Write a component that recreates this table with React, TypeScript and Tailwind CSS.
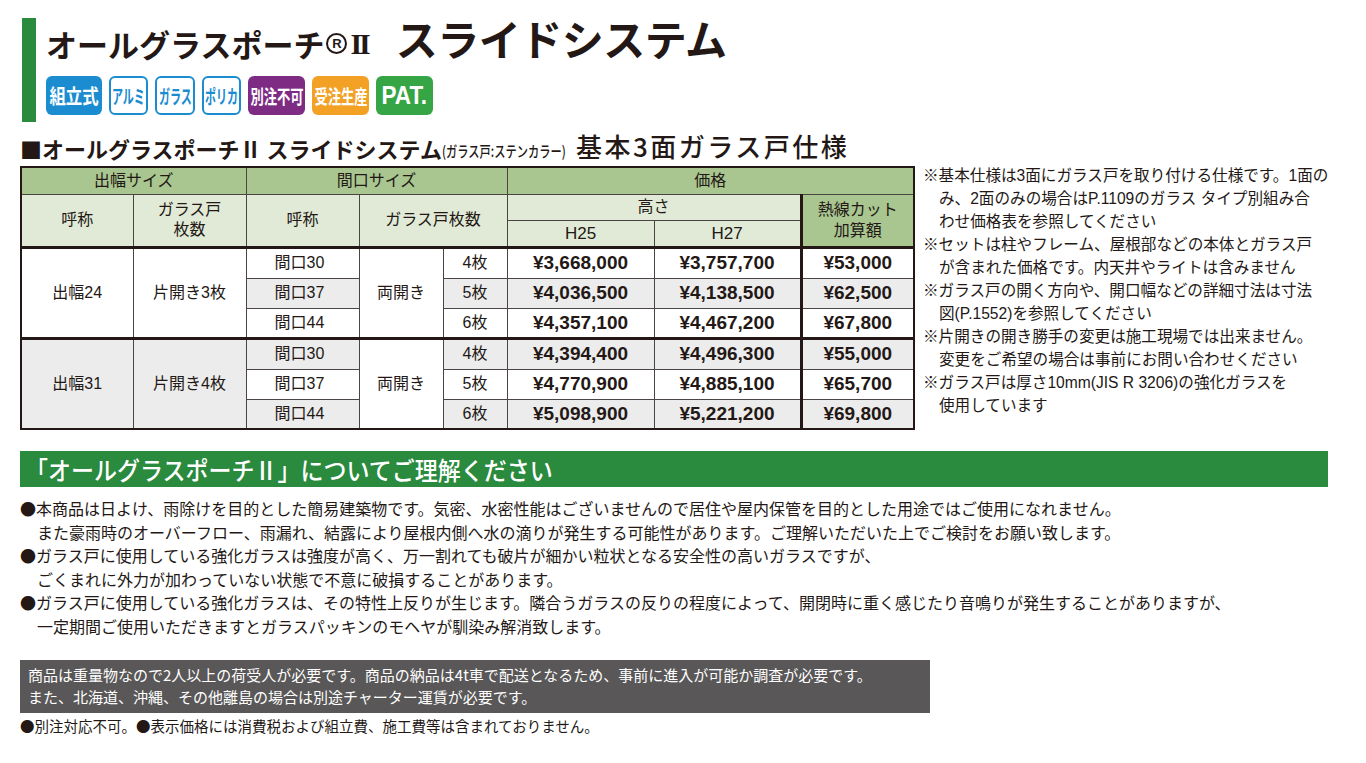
import React from "react";

const JP = "font-['Noto_Sans_CJK_JP',sans-serif]";
const TB = "font-['Liberation_Sans','Noto_Sans_CJK_JP',sans-serif]";

const thin = "border border-[#4a4442]";

function Badge({
  text,
  w,
  cls,
  scale,
  size,
}: {
  text: string;
  w: string;
  cls: string;
  scale: string;
  size: string;
}) {
  return (
    <div className={`flex h-[39px] items-center justify-center overflow-hidden rounded-[6px] ${w} ${cls}`}>
      <span className={`inline-block whitespace-nowrap font-bold leading-none ${size} ${scale}`}>{text}</span>
    </div>
  );
}

type Row = {
  maguchi: string;
  mai: string;
  h25: string;
  h27: string;
  cut: string;
  gray: boolean;
};

const group1: Row[] = [
  { maguchi: "間口30", mai: "4枚", h25: "¥3,668,000", h27: "¥3,757,700", cut: "¥53,000", gray: false },
  { maguchi: "間口37", mai: "5枚", h25: "¥4,036,500", h27: "¥4,138,500", cut: "¥62,500", gray: true },
  { maguchi: "間口44", mai: "6枚", h25: "¥4,357,100", h27: "¥4,467,200", cut: "¥67,800", gray: false },
];
const group2: Row[] = [
  { maguchi: "間口30", mai: "4枚", h25: "¥4,394,400", h27: "¥4,496,300", cut: "¥55,000", gray: true },
  { maguchi: "間口37", mai: "5枚", h25: "¥4,770,900", h27: "¥4,885,100", cut: "¥65,700", gray: false },
  { maguchi: "間口44", mai: "6枚", h25: "¥5,098,900", h27: "¥5,221,200", cut: "¥69,800", gray: true },
];

function Group({ rows, name, door, first }: { rows: Row[]; name: string; door: string; first: boolean }) {
  const topThick = "border-t-[3px] border-t-[#231815]";
  return (
    <>
      {rows.map((r, i) => {
        const bg = r.gray ? "bg-[#ececec]" : "bg-white";
        const t = i === 0 ? topThick : "";
        return (
          <tr key={i} className="h-[30px]">
            {i === 0 && (
              <>
                <td rowSpan={3} className={`${thin} ${topThick} ${first ? "bg-white" : "bg-[#ececec]"} text-center text-[16px]`}>
                  {name}
                </td>
                <td rowSpan={3} className={`${thin} ${topThick} ${first ? "bg-white" : "bg-[#ececec]"} text-center text-[16px]`}>
                  {door}
                </td>
              </>
            )}
            <td className={`${thin} ${t} ${bg} pl-[28px] text-left text-[16px]`}>{r.maguchi}</td>
            {i === 0 && (
              <td rowSpan={3} className={`${thin} ${topThick} bg-white text-center text-[16px]`}>
                両開き
              </td>
            )}
            <td className={`${thin} ${t} ${bg} text-center text-[16px]`}>{r.mai}</td>
            <td className={`${thin} ${t} ${bg} text-center text-[19px] font-bold`}>{r.h25}</td>
            <td className={`${thin} ${t} ${bg} text-center text-[19px] font-bold`}>{r.h27}</td>
            <td className={`${thin} ${t} border-l-[3px] border-l-[#231815] ${bg} text-center text-[19px] font-bold`}>
              {r.cut}
            </td>
          </tr>
        );
      })}
    </>
  );
}

function PriceTable() {
  const h1 = "bg-[#a9c690]";
  const h2 = "bg-[#e1ead6]";
  return (
    <table className={`w-[893px] table-fixed border-collapse border-2 border-[#231815] text-[#231815] ${TB}`}>
      <colgroup>
        <col className="w-[112px]" />
        <col className="w-[113px]" />
        <col className="w-[113px]" />
        <col className="w-[84px]" />
        <col className="w-[64px]" />
        <col className="w-[147px]" />
        <col className="w-[147px]" />
        <col className="w-[113px]" />
      </colgroup>
      <thead>
        <tr className="h-[27px]">
          <th colSpan={2} className={`${thin} ${h1} text-center text-[16px] font-normal`}>出幅サイズ</th>
          <th colSpan={3} className={`${thin} ${h1} text-center text-[16px] font-normal`}>間口サイズ</th>
          <th colSpan={3} className={`${thin} ${h1} text-center text-[16px] font-normal`}>価格</th>
        </tr>
        <tr className="h-[26px]">
          <th rowSpan={2} className={`${thin} ${h2} text-center text-[16px] font-normal`}>呼称</th>
          <th rowSpan={2} className={`${thin} ${h2} text-center text-[16px] font-normal leading-[20px]`}>
            ガラス戸
            <br />
            枚数
          </th>
          <th rowSpan={2} className={`${thin} ${h2} text-center text-[16px] font-normal`}>呼称</th>
          <th rowSpan={2} colSpan={2} className={`${thin} ${h2} text-center text-[16px] font-normal`}>ガラス戸枚数</th>
          <th colSpan={2} className={`${thin} ${h2} text-center text-[16px] font-normal`}>高さ</th>
          <th
            rowSpan={2}
            className={`${thin} border-l-[3px] border-l-[#231815] ${h1} text-center text-[16px] font-normal leading-[21px]`}
          >
            熱線カット
            <br />
            加算額
          </th>
        </tr>
        <tr className="h-[26px]">
          <th className={`${thin} ${h2} text-center text-[17px] font-normal`}>H25</th>
          <th className={`${thin} ${h2} text-center text-[17px] font-normal`}>H27</th>
        </tr>
      </thead>
      <tbody>
        <Group rows={group1} name="出幅24" door="片開き3枚" first={true} />
        <Group rows={group2} name="出幅31" door="片開き4枚" first={false} />
      </tbody>
    </table>
  );
}

const notes: [boolean, string][] = [
  [true, "※基本仕様は3面にガラス戸を取り付ける仕様です。1面の"],
  [false, "み、2面のみの場合はP.1109のガラス タイプ別組み合"],
  [false, "わせ価格表を参照してください"],
  [true, "※セットは柱やフレーム、屋根部などの本体とガラス戸"],
  [false, "が含まれた価格です。内天井やライトは含みません"],
  [true, "※ガラス戸の開く方向や、開口幅などの詳細寸法は寸法"],
  [false, "図(P.1552)を参照してください"],
  [true, "※片開きの開き勝手の変更は施工現場では出来ません。"],
  [false, "変更をご希望の場合は事前にお問い合わせください"],
  [true, "※ガラス戸は厚さ10mm(JIS R 3206)の強化ガラスを"],
  [false, "使用しています"],
];

const bullets: [boolean, string][] = [
  [true, "●本商品は日よけ、雨除けを目的とした簡易建築物です。気密、水密性能はございませんので居住や屋内保管を目的とした用途ではご使用になれません。"],
  [false, "また豪雨時のオーバーフロー、雨漏れ、結露により屋根内側へ水の滴りが発生する可能性があります。ご理解いただいた上でご検討をお願い致します。"],
  [true, "●ガラス戸に使用している強化ガラスは強度が高く、万一割れても破片が細かい粒状となる安全性の高いガラスですが、"],
  [false, "ごくまれに外力が加わっていない状態で不意に破損することがあります。"],
  [true, "●ガラス戸に使用している強化ガラスは、その特性上反りが生じます。隣合うガラスの反りの程度によって、開閉時に重く感じたり音鳴りが発生することがありますが、"],
  [false, "一定期間ご使用いただきますとガラスパッキンのモヘヤが馴染み解消致します。"],
];

export default function App() {
  return (
    <div className={`relative h-[763px] w-[1366px] overflow-hidden bg-white text-[#231815] ${JP}`}>
      {/* Title block */}
      <div className="ml-[22px] flex pt-[18px]">
        <div className="h-[104px] w-[14px] bg-[#2a8a3e]" />
        <div className="ml-[10px] flex flex-col">
          <div className="flex h-[43px] items-end whitespace-nowrap pb-[2px] font-bold leading-none">
            <span className="text-[31px]">オールグラスポーチ</span>
            <span className="mb-[5px] ml-[2px] flex h-[21px] w-[21px] items-center justify-center rounded-full border-2 border-[#231815] font-['Liberation_Sans',sans-serif] text-[13px] font-bold leading-none">
              R
            </span>
            <span className="ml-[3px] font-['Liberation_Serif',serif] text-[30px] font-bold tracking-[-3px]">II</span>
            <span className="ml-[28px] text-[42px] tracking-[-0.5px]">スライドシステム</span>
          </div>
          <div className="mt-[15px] flex gap-[7px]">
            <Badge text="組立式" w="w-[56px]" cls="bg-[#1a8ccf] text-white" size="text-[20px]" scale="scale-x-[0.82]" />
            <Badge text="アルミ" w="w-[39px]" cls="border-2 border-[#1a8ccf] bg-white text-[#1a8ccf]" size="text-[19px]" scale="scale-x-[0.58]" />
            <Badge text="ガラス" w="w-[40px]" cls="border-2 border-[#1a8ccf] bg-white text-[#1a8ccf]" size="text-[19px]" scale="scale-x-[0.58]" />
            <Badge text="ポリカ" w="w-[39px]" cls="border-2 border-[#1a8ccf] bg-white text-[#1a8ccf]" size="text-[19px]" scale="scale-x-[0.58]" />
            <Badge text="別注不可" w="w-[57px]" cls="bg-[#7e2b84] text-white" size="text-[19px]" scale="scale-x-[0.7]" />
            <Badge text="受注生産" w="w-[57px]" cls="bg-[#f3a125] text-white" size="text-[19px]" scale="scale-x-[0.7]" />
            <div className="flex h-[39px] w-[57px] items-center justify-center rounded-[6px] bg-[#36a546] text-white">
              <span className="inline-block scale-x-[0.9] font-['Liberation_Sans',sans-serif] text-[25px] font-bold leading-none">
                PAT.
              </span>
            </div>
          </div>
        </div>
      </div>

      {/* Section heading */}
      <div className="ml-[20px] mt-[7px] flex h-[30px] items-end whitespace-nowrap leading-none">
        <span className="text-[22px] font-bold">■オールグラスポーチⅡ スライドシステム</span>
        <span className="mb-[1px] inline-block w-[126px] overflow-visible">
          <span className="inline-block origin-left scale-x-[0.75] text-[15px] font-medium">(ガラス戸:ステンカラー)</span>
        </span>
        <span className="ml-[8px] text-[26px] font-medium tracking-[2.5px]">基本3面ガラス戸仕様</span>
      </div>

      {/* Table + notes */}
      <div className="ml-[20px] mt-[7px] flex items-start">
        <PriceTable />
        <div className={`ml-[8px] mt-[-2px] flex flex-col text-[15.6px] leading-[23px] ${TB}`}>
          {notes.map(([head, t], i) => (
            <div key={i} className={`whitespace-nowrap ${head ? "" : "pl-[16px]"}`}>
              {t}
            </div>
          ))}
        </div>
      </div>

      {/* Green banner */}
      <div className="ml-[20px] mt-[21px] flex h-[36px] w-[1308px] items-center bg-[#2a8a3e] pl-[5px]">
        <span className="inline-block origin-left scale-x-[0.92] whitespace-nowrap text-[25px] font-medium leading-none text-white">
          「オールグラスポーチⅡ」についてご理解ください
        </span>
      </div>

      {/* Bullets */}
      <div className="ml-[20px] mt-[10px] flex flex-col text-[16px] leading-[23.6px]">
        {bullets.map(([head, t], i) => (
          <div key={i} className={`whitespace-nowrap ${head ? "" : "pl-[17px]"}`}>
            {t}
          </div>
        ))}
      </div>

      {/* Gray box */}
      <div className="ml-[20px] mt-[21px] flex h-[53px] w-[910px] flex-col justify-center bg-[#595757] pl-[8px] text-[15px] leading-[22px] text-white">
        <div className="whitespace-nowrap">
          商品は重量物なので2人以上の荷受人が必要です。商品の納品は4t車で配送となるため、事前に進入が可能か調査が必要です。
        </div>
        <div className="whitespace-nowrap">また、北海道、沖縄、その他離島の場合は別途チャーター運賃が必要です。</div>
      </div>

      {/* Footer */}
      <div className="ml-[20px] mt-[2px] whitespace-nowrap text-[14.5px] leading-[22px]">
        ●別注対応不可。●表示価格には消費税および組立費、施工費等は含まれておりません。
      </div>
    </div>
  );
}
